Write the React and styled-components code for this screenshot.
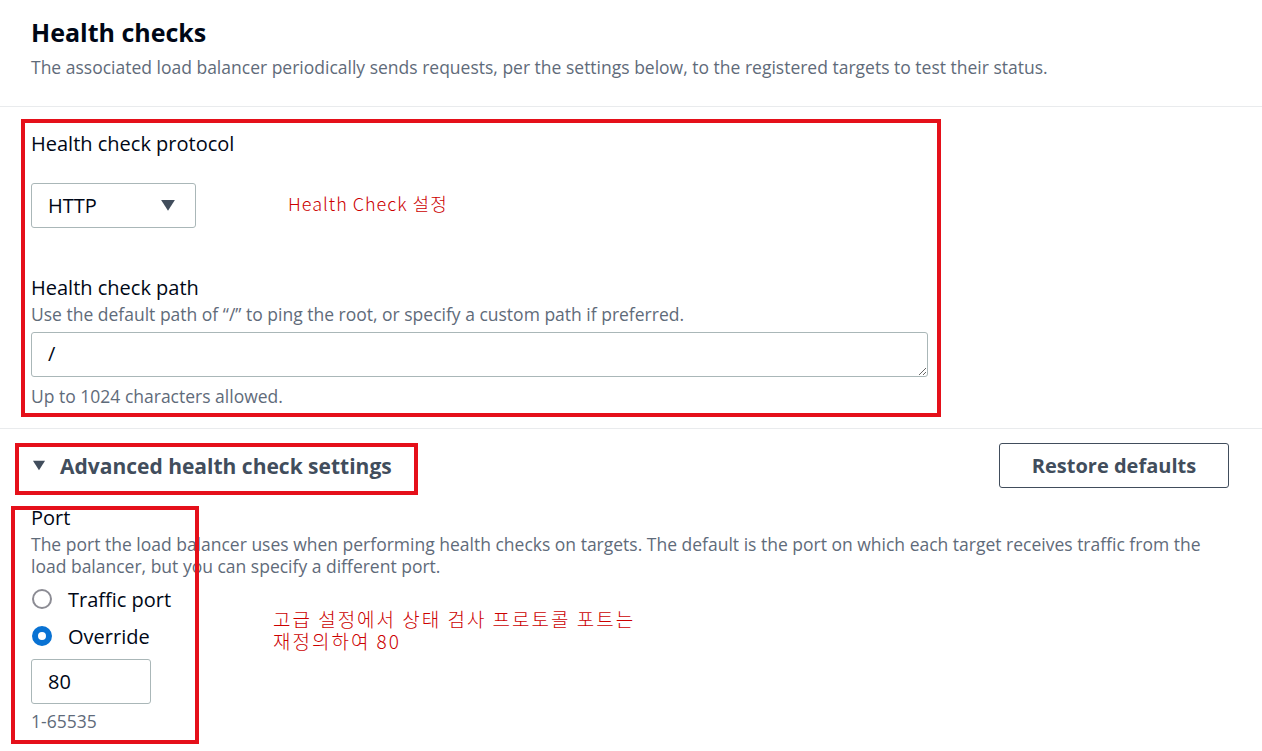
import React from "react";
import styled, { createGlobalStyle } from "styled-components";

const GlobalStyle = createGlobalStyle`
  html, body {
    margin: 0;
    padding: 0;
    background: #ffffff;
  }
  body {
    font-family: "Open Sans", "Noto Sans", sans-serif;
    color: #000716;
  }
`;

const Page = styled.div`
  position: relative;
  width: 1262px;
  height: 751px;
  overflow: hidden;
  background: #fff;
`;

const Header = styled.div`
  padding: 17px 31px 0;
  height: 89px;
`;

const Title = styled.h2`
  margin: 0;
  font-size: 25px;
  line-height: 30px;
  font-weight: 700;
  color: #000716;
`;

const HeaderDesc = styled.p`
  margin: 9px 0 0;
  font-size: 17.5px;
  line-height: 22px;
  color: #5f6b7a;
  white-space: nowrap;
`;

const Divider = styled.div`
  height: 1px;
  background: #e9ebed;
`;

const Section = styled.div`
  padding: ${(p) => p.$pad || "0 31px"};
  display: flex;
  flex-direction: column;
`;

const Field = styled.div`
  display: flex;
  flex-direction: column;
  margin-top: ${(p) => p.$top || 0}px;
`;

const Label = styled.div`
  font-size: 20px;
  line-height: 24px;
  color: #000716;
`;

const Desc = styled.div`
  margin-top: 3px;
  font-size: 17.5px;
  line-height: 22px;
  color: #5f6b7a;
  max-width: ${(p) => p.$max || "none"};
`;

const Constraint = styled.div`
  margin-top: ${(p) => p.$top || 8}px;
  font-size: 17.5px;
  line-height: 22px;
  color: #5f6b7a;
`;

const SelectRow = styled.div`
  display: flex;
  align-items: center;
  margin-top: 27px;
`;

const Select = styled.div`
  box-sizing: border-box;
  width: 165px;
  height: 45px;
  border: 1px solid #aab7b8;
  border-radius: 3px;
  display: flex;
  align-items: center;
  justify-content: space-between;
  padding: 0 19px 0 16px;
  font-size: 20px;
  color: #000716;
`;

const Note = styled.span`
  font-family: "Noto Sans CJK KR", sans-serif;
  font-size: ${(p) => p.$size || 18}px;
  line-height: 21px;
  color: #cc0000;
  font-weight: 300;
  letter-spacing: ${(p) => p.$spacing || 0}px;
`;

const SideNote = styled(Note)`
  margin-left: 92px;
  margin-top: -4px;
`;

const TextArea = styled.textarea`
  box-sizing: border-box;
  margin-top: 7px;
  width: 897px;
  height: 45px;
  border: 1px solid #aab7b8;
  border-radius: 3px;
  padding: 9px 16px;
  font-family: "Open Sans", sans-serif;
  font-size: 20px;
  line-height: 24px;
  color: #000716;
  resize: vertical;
  outline: none;
`;

const AdvancedRow = styled.div`
  display: flex;
  align-items: center;
  justify-content: space-between;
  padding: 14px 33px 0 32px;
`;

const Expander = styled.div`
  display: flex;
  align-items: center;
  gap: 14px;
  font-size: 21px;
  font-weight: 700;
  color: #414d5c;
`;

const Button = styled.button`
  box-sizing: border-box;
  width: 230px;
  height: 45px;
  border: 1px solid #414d5c;
  border-radius: 3px;
  background: #fff;
  font-family: "Open Sans", sans-serif;
  font-size: 20px;
  font-weight: 700;
  color: #414d5c;
`;

const RadioGroup = styled.div`
  display: flex;
  flex-direction: column;
  gap: 7px;
  margin-top: 7px;
`;

const RadioRow = styled.div`
  display: flex;
  align-items: center;
  height: 30px;
  gap: 16px;
  font-size: 20px;
  color: #000716;
`;

const RadioDot = styled.span`
  box-sizing: border-box;
  width: 20px;
  height: 20px;
  border-radius: 50%;
  margin-left: 1px;
  background: #fff;
  border: ${(p) => (p.$checked ? "6px solid #0972d3" : "2px solid #8c8c94")};
`;

const PortInput = styled.input`
  box-sizing: border-box;
  margin-top: 8px;
  width: 120px;
  height: 45px;
  border: 1px solid #aab7b8;
  border-radius: 3px;
  padding: 0 16px;
  font-family: "Open Sans", sans-serif;
  font-size: 20px;
  color: #000716;
  outline: none;
`;

const Mark = styled.div`
  position: absolute;
  box-sizing: border-box;
  border: 4px solid #e5101a;
  pointer-events: none;
`;

const FloatNote = styled(Note)`
  position: absolute;
  left: 273px;
  top: 608px;
  line-height: 22px;
`;

const Caret = ({ size = 16, color = "#414d5c" }) => (
  <svg width={size} height={size * 0.8} viewBox="0 0 16 13">
    <path d="M1 1h14L8 12z" fill={color} />
  </svg>
);

export default function App() {
  return (
    <Page>
      <GlobalStyle />
      <Header>
        <Title>Health checks</Title>
        <HeaderDesc>
          The associated load balancer periodically sends requests, per the settings below, to the
          registered targets to test their status.
        </HeaderDesc>
      </Header>
      <Divider />
      <Section $pad="25px 31px 21px">
        <Field>
          <Label>Health check protocol</Label>
          <SelectRow>
            <Select>
              HTTP
              <Caret />
            </Select>
            <SideNote $spacing={1}>Health Check 설정</SideNote>
          </SelectRow>
        </Field>
        <Field $top={48}>
          <Label>Health check path</Label>
          <Desc>Use the default path of “/” to ping the root, or specify a custom path if preferred.</Desc>
          <TextArea readOnly value="/" />
          <Constraint>Up to 1024 characters allowed.</Constraint>
        </Field>
      </Section>
      <Divider />
      <AdvancedRow>
        <Expander>
          <Caret size={14} />
          Advanced health check settings
        </Expander>
        <Button>Restore defaults</Button>
      </AdvancedRow>
      <Section $pad="18px 31px 0">
        <Field>
          <Label>Port</Label>
          <Desc $max="1185px">
            The port the load balancer uses when performing health checks on targets. The default is
            the port on which each target receives traffic from the load balancer, but you can specify
            a different port.
          </Desc>
          <RadioGroup>
            <RadioRow>
              <RadioDot />
              Traffic port
            </RadioRow>
            <RadioRow>
              <RadioDot $checked />
              Override
            </RadioRow>
          </RadioGroup>
          <PortInput readOnly value="80" />
          <Constraint $top={6}>1-65535</Constraint>
        </Field>
      </Section>

      <FloatNote $size={19} $spacing={2}>
        고급 설정에서 상태 검사 프로토콜 포트는
        <br />
        재정의하여 80
      </FloatNote>
      <Mark style={{ left: 21, top: 119, width: 920, height: 298 }} />
      <Mark style={{ left: 15, top: 443, width: 403, height: 52 }} />
      <Mark style={{ left: 11, top: 506, width: 188, height: 238 }} />
    </Page>
  );
}
